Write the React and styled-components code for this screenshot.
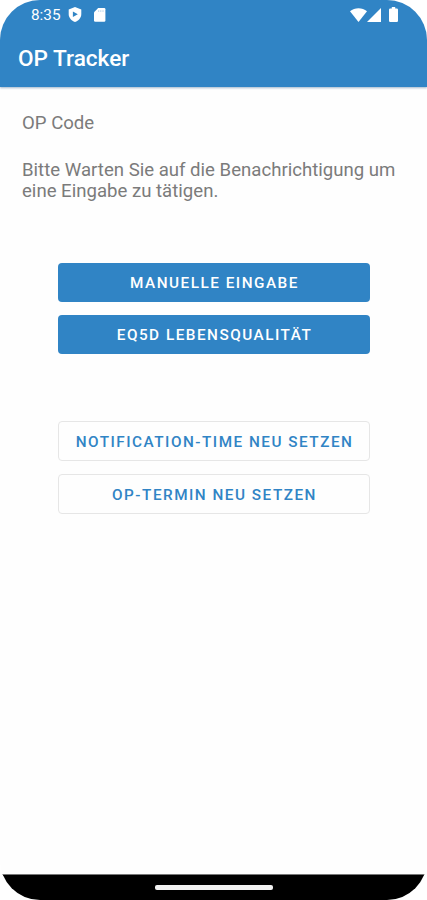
import styled, { createGlobalStyle } from "styled-components";

const GlobalStyle = createGlobalStyle`
  body {
    margin: 0;
    background: #fff;
    font-family: Roboto, "Liberation Sans", sans-serif;
  }
`;

const Screen = styled.div`
  box-sizing: border-box;
  width: 427px;
  height: 900px;
  display: flex;
  flex-direction: column;
  overflow: hidden;
  border-radius: 40px;
  background: #fefefe;
`;

const Header = styled.header`
  height: 87px;
  flex: none;
  background: #3084c5;
  color: #fff;
  box-shadow: 0 1px 2px rgba(48, 100, 145, 0.45);
`;

const StatusBar = styled.div`
  height: 29px;
  display: flex;
  align-items: center;
  padding: 0 29px 0 31px;
  svg {
    display: block;
  }
`;

const Clock = styled.span`
  width: 37px;
  font-size: 15.3px;
  line-height: 29px;
  padding-top: 1px;
`;

const StatusIcons = styled.div`
  display: flex;
  align-items: center;
  gap: ${(props) => props.$gap}px;
  margin-left: ${(props) => (props.$end ? "auto" : "0")};
`;

const Title = styled.h1`
  margin: 0;
  padding: 16px 18px 0;
  font-size: 22.6px;
  line-height: 28px;
  font-weight: 500;
  white-space: nowrap;
`;

const Content = styled.main`
  flex: 1;
  padding: 26px 22px 0;
`;

const Text = styled.p`
  margin: 0 0 25px;
  color: #7b7b7b;
  font-size: 18.6px;
  line-height: 21.5px;
  white-space: nowrap;
`;

const ButtonGroup = styled.div`
  display: flex;
  flex-direction: column;
  gap: 13px;
  margin: ${(props) => props.$top}px 35px 0 36px;
`;

const Button = styled.button`
  box-sizing: border-box;
  height: ${(props) => (props.$outline ? 40 : 39)}px;
  margin: 0;
  padding: 1px 0 0 1px;
  border: ${(props) => (props.$outline ? "1px solid #e6e6e6" : "0")};
  border-radius: 4px;
  background: ${(props) => (props.$outline ? "#fefefe" : "#3084c5")};
  color: ${(props) => (props.$outline ? "#3084c5" : "#fff")};
  font-family: inherit;
  font-size: 15.3px;
  font-weight: 500;
  letter-spacing: 1.5px;
  text-transform: uppercase;
  white-space: nowrap;
`;

const NavigationBar = styled.footer`
  box-sizing: border-box;
  height: 26px;
  flex: none;
  display: flex;
  justify-content: center;
  border-top: 1px solid #777;
  background: #000;
`;

const HomeHandle = styled.div`
  width: 118px;
  height: 5px;
  margin-top: 10px;
  border-radius: 2px;
  background: #f2f2f2;
`;

function ShieldIcon() {
  return (
    <svg width="14" height="15" viewBox="0 0 14 15">
      <path d="M7 0 13.3 2.4V7C13.3 10.8 10.6 13.7 7 15 3.4 13.7.7 10.8.7 7V2.4Z" fill="#fff" />
      <path d="M4.9 4.6 9.8 7.3 4.9 10.1Z" fill="#3084c5" />
    </svg>
  );
}

function SdCardIcon() {
  return (
    <svg width="12" height="14" viewBox="0 0 12 14">
      <path d="M4.2 0H10.2Q11.4 0 11.4 1.3V12.6Q11.4 13.8 10.2 13.8H1.3Q0 13.8 0 12.6V4.2Z" fill="#fff" />
      <path d="M4.7 2.2V4M6.8 2.2V4M9 2.2V4" stroke="#3084c5" strokeWidth=".7" opacity=".45" />
    </svg>
  );
}

function WifiIcon() {
  return (
    <svg width="17" height="14" viewBox="0 0 17 14">
      <path d="M0 3.3C4.7-.9 12.3-.9 17 3.3L8.5 14Z" fill="#fff" />
    </svg>
  );
}

function SignalIcon() {
  return (
    <svg width="14" height="14" viewBox="0 0 14 14">
      <path d="M14 0V14H0Z" fill="#fff" />
    </svg>
  );
}

function BatteryIcon() {
  return (
    <svg width="9" height="15" viewBox="0 0 9 15">
      <path d="M2.8 0H6.2V1.5H7.8Q9 1.5 9 2.7V13.8Q9 15 7.8 15H1.2Q0 15 0 13.8V2.7Q0 1.5 1.2 1.5H2.8Z" fill="#fff" />
    </svg>
  );
}

export default function App() {
  return (
    <>
      <GlobalStyle />
      <Screen>
        <Header>
          <StatusBar>
            <Clock>8:35</Clock>
            <StatusIcons $gap={12}>
              <ShieldIcon />
              <SdCardIcon />
            </StatusIcons>
            <StatusIcons $gap={8} $end>
              <StatusIcons $gap={0}>
                <WifiIcon />
                <SignalIcon />
              </StatusIcons>
              <BatteryIcon />
            </StatusIcons>
          </StatusBar>
          <Title>OP Tracker</Title>
        </Header>
        <Content>
          <Text>OP Code</Text>
          <Text>
            Bitte Warten Sie auf die Benachrichtigung um
            <br />
            eine Eingabe zu tätigen.
          </Text>
          <ButtonGroup $top={60.5}>
            <Button>Manuelle Eingabe</Button>
            <Button>EQ5D Lebensqualität</Button>
          </ButtonGroup>
          <ButtonGroup $top={67}>
            <Button $outline>Notification-Time neu setzen</Button>
            <Button $outline>OP-Termin neu setzen</Button>
          </ButtonGroup>
        </Content>
        <NavigationBar>
          <HomeHandle />
        </NavigationBar>
      </Screen>
    </>
  );
}
